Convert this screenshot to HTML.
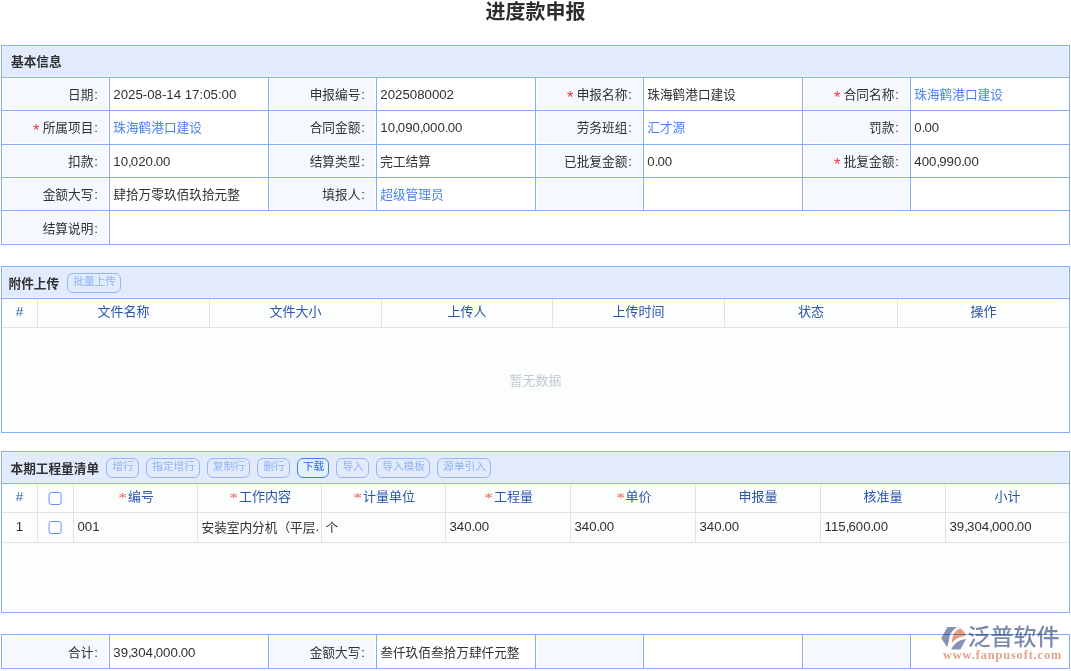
<!DOCTYPE html>
<html lang="zh-CN">
<head>
<meta charset="utf-8">
<title>进度款申报</title>
<style>
*{box-sizing:border-box}
html,body{margin:0;padding:0}
body{width:1071px;height:671px;position:relative;overflow:hidden;background:#fff;
 font-family:"Liberation Sans","Noto Sans CJK SC",sans-serif;font-size:13.25px;line-height:16px;color:#2f3133}
.z{display:inline-block;position:relative;white-space:nowrap;vertical-align:baseline;font-size:12.67px;font-family:"Liberation Sans","Noto Sans CJK SC",sans-serif}
h1{position:absolute;left:0;top:1px;width:1071px;margin:0;text-align:center;font-size:20px;line-height:22px;font-weight:bold;color:#2c2e31}
table{border-collapse:separate;border-spacing:0;table-layout:fixed;position:absolute}
td,th{padding:0;font-weight:normal;white-space:nowrap;overflow:hidden;vertical-align:middle}
/* ---- form tables ---- */
.form{left:1px;width:1069px;border-left:1px solid #86adf9;border-top:1px solid #86adf9}
.form td,.form th{border-right:1px solid #86adf9;border-bottom:1px solid #86adf9}
.form th{background:#e1ebfd;box-shadow:inset 0 0 0 1px rgba(255,255,255,.45);text-align:left;padding-left:9px;font-weight:bold}
.form .lb{background:#f5f8ff;box-shadow:inset 0 0 0 1px #fff;text-align:right;padding-right:11px}
.form .v{padding-left:3.3px;text-align:left}
.form td{padding-top:1px}
.form tr.lo td{padding-top:3px}
.req{color:#f5323f;font-size:16.5px;line-height:0;position:relative;top:4.2px;margin-right:3.4px}
.lb .z{margin-right:1px}
.p{letter-spacing:-.9px}
a{color:#4a82f0;text-decoration:none}

/* ---- list panels ---- */
.panel{position:absolute;left:1px;width:1069px;border:1px solid #86adf9;background:#fcfefd;box-shadow:inset 0 0 0 1px #fff}
.panel header{position:relative;height:32px;background:#e1ebfd;border-bottom:1px solid #86adf9;box-shadow:inset 0 0 0 1px rgba(255,255,255,.45)}
.panel h2{position:absolute;margin:0;top:8.6px;font-size:13px;line-height:16px;font-weight:bold}
.btn{position:absolute;top:6px;height:20px;padding:0;margin:0;border:1px solid #93b7f8;border-radius:6px;background:transparent;
 color:#8fb3f5;font-family:"Liberation Sans","Noto Sans CJK SC",sans-serif;font-size:10.67px;line-height:16px;text-align:center}
.btn .z{font-size:10.67px;position:relative;top:-2px;left:.6px}
.btn.on{border-color:#3d7ff5;color:#3d7ff5;background:#e6effe}
.btn.on .z{font-weight:500}
.grid{left:0;top:32px;width:1067px}
.grid th,.grid td{border-right:1px solid #e3e2e9;border-bottom:1px solid #e3e2e9}
.grid th:last-child,.grid td:last-child{border-right:0}
.grid th{height:29px;color:#2b55ae;text-align:center;padding-bottom:2px}
.grid td{height:30px;text-align:left;padding-left:3.5px;padding-bottom:2px}
.grid td.c{text-align:center;padding-left:0}
.grid .rq{display:inline-block;vertical-align:baseline;position:relative;top:-2.3px;margin:0 1.6px 0 2px;line-height:0}
.grid .rq svg{display:block}
.grid .rq .t{position:absolute;width:1px;height:1px;overflow:hidden;clip:rect(0 0 0 0)}
.cb{display:inline-block;vertical-align:middle;position:relative;left:-0.5px;top:1px}
.grid td .z{top:1px}
.empty{position:absolute;left:0;width:1067px;top:106px;text-align:center;color:#c3c8d3;line-height:16px}
.clip{overflow:hidden;white-space:nowrap}
/* ---- watermark ---- */
.wm{position:absolute;left:940px;top:624px;width:124px;height:40px;mix-blend-mode:multiply}
.wm .z{position:absolute;left:27.5px;top:1.5px;font-size:23px;line-height:1;font-weight:500;color:#7a8aad}
.wm .url{position:absolute;left:3px;top:24.5px;font-family:"Liberation Serif",serif;font-weight:bold;font-size:12.3px;line-height:12px;letter-spacing:.9px;color:#e0a38b;white-space:nowrap}
.wm svg.logo{position:absolute;left:0;top:0}
</style>
</head>
<body>
<h1><span class="z" style="font-size:20px;">进度款申报</span></h1>
<table class="form" style="top:45px"><colgroup><col style="width:108px"><col style="width:159px"><col style="width:108px"><col style="width:159px"><col style="width:108px"><col style="width:159px"><col style="width:108px"><col style="width:159px"></colgroup><tr style="height:32px"><th colspan="8"><span class="z">基本信息</span></th></tr>
<tr style="height:33px"><td class="lb"><span class="z">日期</span>:</td><td class="v">2025-08-14 17:05:00</td><td class="lb"><span class="z">申报编号</span>:</td><td class="v">2025080002</td><td class="lb"><span class="req">*</span><span class="z">申报名称</span>:</td><td class="v"><span class="z">珠海鹤港口建设</span></td><td class="lb"><span class="req">*</span><span class="z">合同名称</span>:</td><td class="v"><a><span class="z">珠海鹤港口建设</span></a></td></tr>
<tr style="height:34px"><td class="lb"><span class="req">*</span><span class="z">所属项目</span>:</td><td class="v"><a><span class="z">珠海鹤港口建设</span></a></td><td class="lb"><span class="z">合同金额</span>:</td><td class="v">10<span class="p">,</span>090<span class="p">,</span>000<span class="p">.</span>00</td><td class="lb"><span class="z">劳务班组</span>:</td><td class="v"><a><span class="z">汇才源</span></a></td><td class="lb"><span class="z">罚款</span>:</td><td class="v">0<span class="p">.</span>00</td></tr>
<tr style="height:33px"><td class="lb"><span class="z">扣款</span>:</td><td class="v">10<span class="p">,</span>020<span class="p">.</span>00</td><td class="lb"><span class="z">结算类型</span>:</td><td class="v"><span class="z">完工结算</span></td><td class="lb"><span class="z">已批复金额</span>:</td><td class="v">0<span class="p">.</span>00</td><td class="lb"><span class="req">*</span><span class="z">批复金额</span>:</td><td class="v">400<span class="p">,</span>990<span class="p">.</span>00</td></tr>
<tr style="height:33px"><td class="lb"><span class="z">金额大写</span>:</td><td class="v"><span class="z">肆拾万零玖佰玖拾元整</span></td><td class="lb"><span class="z">填报人</span>:</td><td class="v"><a><span class="z">超级管理员</span></a></td><td class="lb"></td><td class="v"></td><td class="lb"></td><td class="v"></td></tr>
<tr class="lo" style="height:34px"><td class="lb"><span class="z">结算说明</span>:</td><td class="v" colspan="7"></td></tr></table>
<section class="panel" style="top:266px;height:167px"><header><h2 style="left:6.5px"><span class="z">附件上传</span></h2><button class="btn" type="button" style="left:65px;width:54px"><span class="z" style="font-size:10.67px;">批量上传</span></button></header><table class="grid"><colgroup><col style="width:36px"><col style="width:172px"><col style="width:172px"><col style="width:171px"><col style="width:172px"><col style="width:173px"><col style="width:171px"></colgroup><tr><th>#</th><th><span class="z" style="font-size:13px;">文件名称</span></th><th><span class="z" style="font-size:13px;">文件大小</span></th><th><span class="z" style="font-size:13px;">上传人</span></th><th><span class="z" style="font-size:13px;">上传时间</span></th><th><span class="z" style="font-size:13px;">状态</span></th><th><span class="z" style="font-size:13px;">操作</span></th></tr></table><div class="empty"><span class="z" style="font-size:13px;">暂无数据</span></div></section>
<section class="panel" style="top:451px;height:162px"><header><h2 style="left:8.5px"><span class="z">本期工程量清单</span></h2><button class="btn" type="button" style="left:104px;width:33px"><span class="z" style="font-size:10.67px;">增行</span></button><button class="btn" type="button" style="left:144px;width:54px"><span class="z" style="font-size:10.67px;">指定增行</span></button><button class="btn" type="button" style="left:205px;width:43px"><span class="z" style="font-size:10.67px;">复制行</span></button><button class="btn" type="button" style="left:255px;width:33px"><span class="z" style="font-size:10.67px;">删行</span></button><button class="btn on" type="button" style="left:295px;width:32px"><span class="z" style="font-size:10.67px;">下载</span></button><button class="btn" type="button" style="left:334px;width:33px"><span class="z" style="font-size:10.67px;">导入</span></button><button class="btn" type="button" style="left:374px;width:54px"><span class="z" style="font-size:10.67px;">导入模板</span></button><button class="btn" type="button" style="left:435px;width:54px"><span class="z" style="font-size:10.67px;">源单引入</span></button></header><table class="grid"><colgroup><col style="width:36px"><col style="width:36px"><col style="width:124px"><col style="width:124px"><col style="width:124px"><col style="width:125px"><col style="width:125px"><col style="width:125px"><col style="width:125px"><col style="width:123px"></colgroup><tr><th>#</th><th><svg class="cb" width="14" height="14" viewBox="0 0 14 14" aria-hidden="true"><rect x="1.1" y="0.5" width="12" height="12" rx="2.2" fill="#fff" stroke="#5f92f5" stroke-width="1"/></svg></th><th><span class="rq"><svg width="7.4" height="5.4" viewBox="0 0 7.4 5.4" aria-hidden="true"><path d="M3.7 0V5.4M.3 1.3L7.1 4.1M.3 4.1L7.1 1.3" stroke="#f56c6c" stroke-width=".95" fill="none"/></svg><span class="t">*</span></span><span class="z" style="font-size:13px;">编号</span></th><th><span class="rq"><svg width="7.4" height="5.4" viewBox="0 0 7.4 5.4" aria-hidden="true"><path d="M3.7 0V5.4M.3 1.3L7.1 4.1M.3 4.1L7.1 1.3" stroke="#f56c6c" stroke-width=".95" fill="none"/></svg><span class="t">*</span></span><span class="z" style="font-size:13px;">工作内容</span></th><th><span class="rq"><svg width="7.4" height="5.4" viewBox="0 0 7.4 5.4" aria-hidden="true"><path d="M3.7 0V5.4M.3 1.3L7.1 4.1M.3 4.1L7.1 1.3" stroke="#f56c6c" stroke-width=".95" fill="none"/></svg><span class="t">*</span></span><span class="z" style="font-size:13px;">计量单位</span></th><th><span class="rq"><svg width="7.4" height="5.4" viewBox="0 0 7.4 5.4" aria-hidden="true"><path d="M3.7 0V5.4M.3 1.3L7.1 4.1M.3 4.1L7.1 1.3" stroke="#f56c6c" stroke-width=".95" fill="none"/></svg><span class="t">*</span></span><span class="z" style="font-size:13px;">工程量</span></th><th><span class="rq"><svg width="7.4" height="5.4" viewBox="0 0 7.4 5.4" aria-hidden="true"><path d="M3.7 0V5.4M.3 1.3L7.1 4.1M.3 4.1L7.1 1.3" stroke="#f56c6c" stroke-width=".95" fill="none"/></svg><span class="t">*</span></span><span class="z" style="font-size:13px;">单价</span></th><th><span class="z" style="font-size:13px;">申报量</span></th><th><span class="z" style="font-size:13px;">核准量</span></th><th><span class="z" style="font-size:13px;">小计</span></th></tr><tr><td class="c">1</td><td class="c"><svg class="cb" width="14" height="14" viewBox="0 0 14 14" aria-hidden="true"><rect x="1.1" y="0.5" width="12" height="12" rx="2.2" fill="#fff" stroke="#5f92f5" stroke-width="1"/></svg></td><td>001</td><td><div class="clip" style="width:116.3px"><span class="z">安装室内分机（平层</span>...</div></td><td><span class="z">个</span></td><td>340<span class="p">.</span>00</td><td>340<span class="p">.</span>00</td><td>340<span class="p">.</span>00</td><td>115<span class="p">,</span>600<span class="p">.</span>00</td><td>39<span class="p">,</span>304<span class="p">,</span>000<span class="p">.</span>00</td></tr></table></section>
<table class="form" style="top:634px"><colgroup><col style="width:108px"><col style="width:159px"><col style="width:108px"><col style="width:159px"><col style="width:108px"><col style="width:159px"><col style="width:108px"><col style="width:159px"></colgroup><tr class="lo" style="height:34px"><td class="lb"><span class="z">合计</span>:</td><td class="v">39<span class="p">,</span>304<span class="p">,</span>000<span class="p">.</span>00</td><td class="lb"><span class="z">金额大写</span>:</td><td class="v"><span class="z">叁仟玖佰叁拾万肆仟元整</span></td><td class="lb"></td><td class="v"></td><td class="lb"></td><td class="v"></td></tr></table>
<div class="wm"><svg class="logo" width="28" height="28" viewBox="0 0 28 28" aria-hidden="true"><path d="M7.4 3L16.95 3Q8.6 9 8.9 17L7.2 23.2L1.2 14.2Z" fill="#8693b2"/><path d="M20.5 4.2C14.2 6.5 11.8 12 11.9 19.2C15.5 14.5 20 12.5 26 12C25 8.5 23 5.8 20.5 4.2Z" fill="#e2a186"/><path d="M11.2 25.4C14 19.5 19 15.8 26.2 15.1L20.3 25.4Z" fill="#8693b2"/></svg><span class="z" style="font-size:23px;">泛普软件</span><span class="url">www.fanpusoft.com</span></div>
</body>
</html>
